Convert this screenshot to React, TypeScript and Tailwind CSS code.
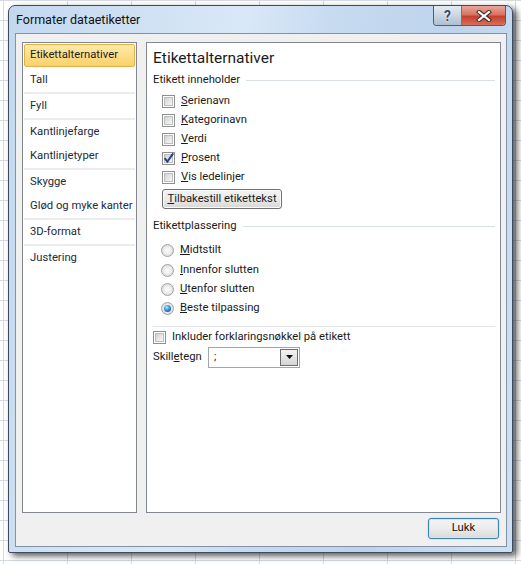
import type { ReactNode } from "react";

const font = "font-['Roboto','Liberation_Sans',sans-serif]";

function CheckBox({ checked = false }: { checked?: boolean }) {
    return (
        <span className="relative w-[13px] h-[13px] shrink-0 border border-[#8e8f8f] bg-white p-[1px]">
            <span className="block w-full h-full border border-[#bdbdbd] bg-linear-to-br from-[#d3d3d3] to-[#f7f7f7]" />
            {checked && (
                <svg className="absolute -left-[1px] -top-[2px]" width="14" height="14" viewBox="0 0 14 14">
                    <path d="M2.6 7.2 L5.4 10.6 L11.2 2.4" fill="none" stroke="#27428a" strokeWidth="2" />
                </svg>
            )}
        </span>
    );
}

function Radio({ checked = false }: { checked?: boolean }) {
    return (
        <span className="w-[13px] h-[13px] shrink-0 rounded-full border border-[#a2a2a2] bg-[radial-gradient(circle_at_50%_50%,#fbfbfb_0%,#eeeeee_45%,#c9c9c9_100%)] flex items-center justify-center">
            {checked && (
                <span className="w-[7px] h-[7px] rounded-full bg-[radial-gradient(circle_at_40%_35%,#b7ecff_0%,#3c9be0_40%,#0c3c78_100%)]" />
            )}
        </span>
    );
}

function Option({ children, checked, radio }: { children: ReactNode; checked?: boolean; radio?: boolean }) {
    return (
        <div className={radio ? "flex items-center h-[19.4px] gap-[6px]" : "flex items-center h-[19px] gap-[6px]"}>
            {radio ? <Radio checked={checked} /> : <CheckBox checked={checked} />}
            <span>{children}</span>
        </div>
    );
}

function SectionHeading({ label }: { label: string }) {
    return (
        <div className="flex items-center h-[14px] gap-[6px]">
            <span className="whitespace-nowrap">{label}</span>
            <span className="flex-1 h-px bg-[#d5dfe5]" />
        </div>
    );
}

const groups = [
    ["Etikettalternativer", "Tall"],
    ["Fyll"],
    ["Kantlinjefarge", "Kantlinjetyper"],
    ["Skygge", "Glød og myke kanter"],
    ["3D-format"],
    ["Justering"],
];

function Sidebar() {
    return (
        <div className="w-[115px] h-full border border-[#828790] bg-white p-px flex flex-col">
            {groups.map((group, gi) => (
                <div key={gi} className="flex flex-col">
                    {gi > 0 && <div className="h-[2px] bg-[#ececec]" />}
                    {group.map((item) => {
                        const selected = item === "Etikettalternativer";
                        return (
                            <div key={item} className="h-[24px] flex">
                                <div
                                    className={
                                        selected
                                            ? "w-full h-[23px] rounded-[2px] border border-[#e3b24a] bg-linear-to-b from-[#fdeaa6] to-[#fbd06a] flex items-center pl-[5px] text-[#1e1e1e]"
                                            : "w-full flex items-center pl-[6px] text-[#1e2a3a]"
                                    }
                                >
                                    {item}
                                </div>
                            </div>
                        );
                    })}
                </div>
            ))}
        </div>
    );
}

function Panel() {
    return (
        <div className="flex-1 h-full border border-[#828790] bg-white pl-[6px] pr-[5px] pt-[6px] flex flex-col text-[#1a1a1a]">
            <div className="h-[20px] flex items-center text-[15.5px]">Etikettalternativer</div>
            <div className="mt-[4px]">
                <SectionHeading label="Etikett inneholder" />
            </div>
            <div className="mt-[5px] pl-[9px] flex flex-col">
                <Option><u>S</u>erienavn</Option>
                <Option><u>K</u>ategorinavn</Option>
                <Option><u>V</u>erdi</Option>
                <Option checked><u>P</u>rosent</Option>
                <Option><u>V</u>is ledelinjer</Option>
                <button className="mt-[2px] w-[120px] h-[20px] rounded-[3px] border border-[#707070] bg-linear-to-b from-[#f2f2f2] via-[#ebebeb] to-[#d6d6d6] shadow-[inset_0_0_0_1px_#fbfbfb] flex items-center justify-center">
                    <span><u>T</u>ilbakestill etikettekst</span>
                </button>
            </div>
            <div className="mt-[10px]">
                <SectionHeading label="Etikettplassering" />
            </div>
            <div className="mt-[8px] pl-[8px] flex flex-col">
                <Option radio><u>M</u>idtstilt</Option>
                <Option radio><u>I</u>nnenfor slutten</Option>
                <Option radio><u>U</u>tenfor slutten</Option>
                <Option radio checked><u>B</u>este tilpassing</Option>
            </div>
            <div className="mt-[7px] h-px bg-[#e2e6ea]" />
            <div className="mt-px flex flex-col">
                <Option>Inkluder forklaringsnøkkel på etikett</Option>
                <div className="flex items-center h-[21px]">
                    <span className="w-[55px]">
                        Skill<u>e</u>tegn
                    </span>
                    <div className="w-[92px] h-[21px] border border-[#a5a5a5] bg-white flex items-center p-px">
                        <span className="flex-1 pl-[4px]">;</span>
                        <span className="w-[18px] h-full border border-[#6d6d6d] bg-linear-to-b from-[#f3f3f3] to-[#d5d5d5] flex items-center justify-center">
                            <svg width="7" height="4" viewBox="0 0 7 4">
                                <path d="M0 0 H7 L3.5 4 Z" fill="#111" />
                            </svg>
                        </span>
                    </div>
                </div>
            </div>
        </div>
    );
}

function TitleButtons() {
    return (
        <div className="ml-auto mr-[6px] flex h-[20px] rounded-b-[4px] border border-t-0 border-[#4f5e70] overflow-hidden">
            <div className="w-[28px] h-full bg-linear-to-b from-[#e3ebf3] via-[#c9d6e3] to-[#aebfd1] flex items-center justify-center border-r border-[#6a7888]">
                <span className="text-[14px] font-bold leading-none text-[#3f4c5b] [text-shadow:0_0_1px_#fff,0_0_2px_#fff]">?</span>
            </div>
            <div className="w-[43px] h-full bg-[linear-gradient(180deg,#e7a89c_0%,#d77463_45%,#c4402c_55%,#d5705b_100%)] flex items-center justify-center">
                <svg width="16" height="12" viewBox="0 0 16 12">
                    <path d="M3 2 L13 10 M13 2 L3 10" stroke="#4a2a26" strokeWidth="4.2" strokeLinecap="square" />
                    <path d="M3 2 L13 10 M13 2 L3 10" stroke="#ffffff" strokeWidth="2.2" strokeLinecap="square" />
                </svg>
            </div>
        </div>
    );
}

export default function App() {
    return (
        <div
            className={`${font} w-[521px] h-[564px] overflow-hidden pt-[5px] pl-[8px] bg-white bg-[linear-gradient(to_right,#d5dae3_1px,transparent_1px),linear-gradient(to_bottom,#d5dae3_1px,transparent_1px)] bg-[size:64px_20px] bg-[position:3px_0]`}
        >
            <div className="w-[505px] h-[548px] rounded-t-[7px] rounded-b-[2px] border border-[#3d4b5c] bg-[linear-gradient(100deg,#c3d8ef_0%,#d9e8f7_40%,#c6daf0_55%,#bed4ec_75%,#cfe0f3_100%)] shadow-[4px_3px_6px_rgba(0,0,0,0.65)] flex flex-col text-[11.25px]">
                <div className="h-[27px] flex items-start">
                    <span className="pl-[7px] pt-[5px] text-[12.5px] text-[#111]">Formater dataetiketter</span>
                    <TitleButtons />
                </div>
                <div className="ml-[6px] mr-[5px] flex-1 mb-[5px] border border-[#8393a6] bg-[#f0f0f0] flex flex-col">
                    <div className="flex pl-[6px] pr-[5px] pt-[8px] h-[479px] gap-[9px]">
                        <Sidebar />
                        <Panel />
                    </div>
                    <div className="flex justify-end pr-[7px] mt-[5px]">
                        <button className="w-[71px] h-[21px] rounded-[3px] border border-[#3c7fb1] bg-linear-to-b from-[#f4f4f4] via-[#ececec] to-[#d9d9d9] shadow-[inset_0_0_0_1px_#c9ecfd,0_0_2px_#9fd6f5] flex items-center justify-center text-[#111]">
                            Lukk
                        </button>
                    </div>
                </div>
            </div>
        </div>
    );
}
